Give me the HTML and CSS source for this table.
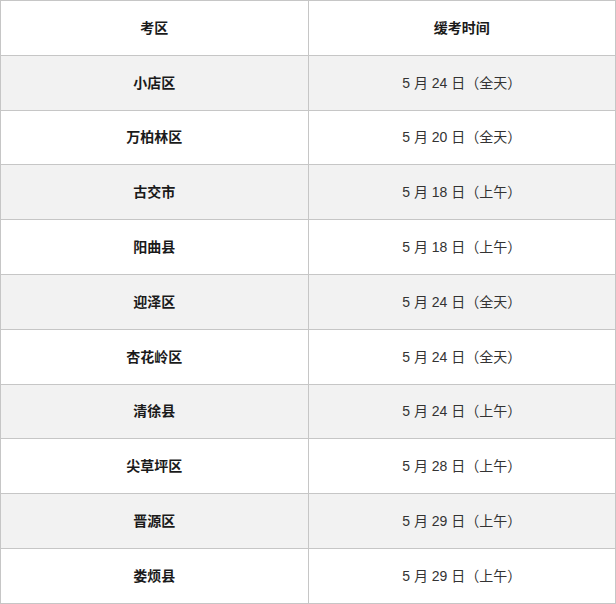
FILE: index.html
```html
<!DOCTYPE html>
<html lang="zh-CN">
<head>
<meta charset="utf-8">
<title>缓考时间</title>
<link rel="stylesheet" href="styles.css">
</head>
<body>
<table class="exam-table">
  <thead>
    <tr><th class="col-area">考区</th><th class="col-time">缓考时间</th></tr>
  </thead>
  <tbody>
    <tr class="alt"><td class="area">小店区</td><td class="time">5 月 24 日（全天）</td></tr>
    <tr><td class="area">万柏林区</td><td class="time">5 月 20 日（全天）</td></tr>
    <tr class="alt"><td class="area">古交市</td><td class="time">5 月 18 日（上午）</td></tr>
    <tr><td class="area">阳曲县</td><td class="time">5 月 18 日（上午）</td></tr>
    <tr class="alt"><td class="area">迎泽区</td><td class="time">5 月 24 日（全天）</td></tr>
    <tr><td class="area">杏花岭区</td><td class="time">5 月 24 日（全天）</td></tr>
    <tr class="alt"><td class="area">清徐县</td><td class="time">5 月 24 日（上午）</td></tr>
    <tr><td class="area">尖草坪区</td><td class="time">5 月 28 日（上午）</td></tr>
    <tr class="alt"><td class="area">晋源区</td><td class="time">5 月 29 日（上午）</td></tr>
    <tr><td class="area">娄烦县</td><td class="time">5 月 29 日（上午）</td></tr>
  </tbody>
</table>
</body>
</html>
```

FILE: styles.css
```css
html, body {
  margin: 0;
  padding: 0;
  background: #ffffff;
}
body {
  font-family: "Liberation Sans", "Noto Sans CJK SC", sans-serif;
  font-size: 14px;
  color: #222;
}
.exam-table {
  width: 616px;
  border-collapse: collapse;
  table-layout: fixed;
}
.exam-table th,
.exam-table td {
  border: 1px solid #c6c6c6;
  text-align: center;
  vertical-align: middle;
  height: 53.8px;
  padding: 0;
  line-height: 20px;
}
.col-area, .col-time {
  width: 50%;
  font-weight: bold;
  color: #1a1a1a;
}
.area {
  font-weight: bold;
  color: #1a1a1a;
}
.time {
  font-weight: normal;
  color: #333;
}
.alt td {
  background: #f2f2f2;
}
```
